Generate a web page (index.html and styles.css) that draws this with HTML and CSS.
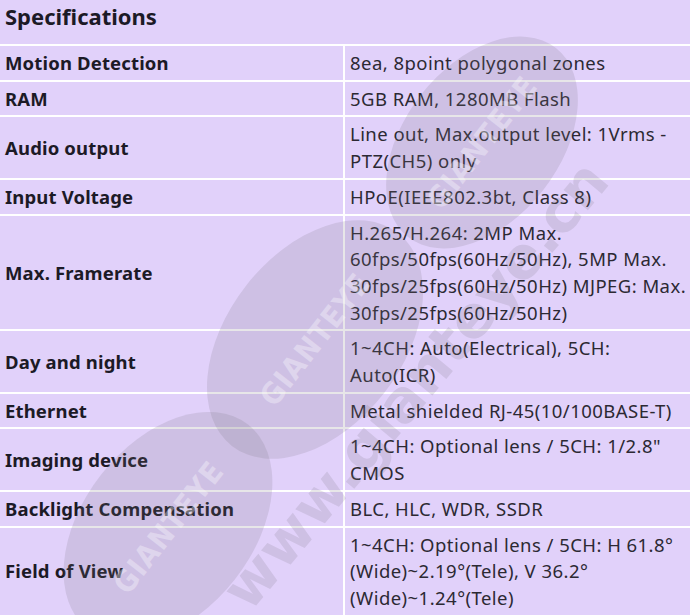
FILE: index.html
```html
<!DOCTYPE html>
<html lang="en">
<head>
<meta charset="utf-8">
<title>Specifications</title>
<link rel="stylesheet" href="styles.css">
</head>
<body>
<div class="page">
  <h2 class="title">Specifications</h2>
  <table class="spec">
    <tbody>
      <tr><th>Motion Detection</th><td>8ea, 8point polygonal zones</td></tr>
      <tr><th>RAM</th><td>5GB RAM, 1280MB Flash</td></tr>
      <tr><th>Audio output</th><td>Line out, Max.output level: 1Vrms -<br>PTZ(CH5) only</td></tr>
      <tr><th>Input Voltage</th><td>HPoE(IEEE802.3bt, Class 8)</td></tr>
      <tr><th>Max. Framerate</th><td>H.265/H.264: 2MP Max.<br>60fps/50fps(60Hz/50Hz), 5MP Max.<br>30fps/25fps(60Hz/50Hz) MJPEG: Max.<br>30fps/25fps(60Hz/50Hz)</td></tr>
      <tr><th>Day and night</th><td>1~4CH: Auto(Electrical), 5CH:<br>Auto(ICR)</td></tr>
      <tr><th>Ethernet</th><td>Metal shielded RJ-45(10/100BASE-T)</td></tr>
      <tr><th>Imaging device</th><td>1~4CH: Optional lens / 5CH: 1/2.8"<br>CMOS</td></tr>
      <tr><th>Backlight Compensation</th><td>BLC, HLC, WDR, SSDR</td></tr>
      <tr><th>Field of View</th><td>1~4CH: Optional lens / 5CH: H 61.8°<br>(Wide)~2.19°(Tele), V 36.2°<br>(Wide)~1.24°(Tele)</td></tr>
    </tbody>
  </table>
  <div class="watermark" aria-hidden="true">
    <div class="blob blob-a"><span>GIANTEYE</span></div>
    <div class="blob blob-b"><span>GIANTEYE</span></div>
    <div class="blob blob-c"><span>GIANTEYE</span></div>
    <div class="url">www.gianteye.cn</div>
  </div>
</div>
</body>
</html>
```

FILE: styles.css
```css
html, body {
  margin: 0;
  padding: 0;
  background: #e1d1fa;
}

body {
  font-family: "Noto Sans", "Open Sans", sans-serif;
  color: #262330;
  overflow: hidden;
}

.page {
  position: relative;
  width: 690px;
  height: 615px;
  overflow: hidden;
  background: #e1d1fa;
}

.title {
  margin: 0;
  padding: 1px 5px 0;
  height: 43px;
  font-size: 22px;
  line-height: 30px;
  font-weight: 700;
  color: #1c1a26;
}

.spec {
  width: 690px;
  border-collapse: collapse;
  table-layout: fixed;
}

.spec th,
.spec td {
  border-top: 2px solid #ffffff;
  padding: 4px 4px 3px 5px;
  font-size: 18.5px;
  line-height: 26.7px;
  vertical-align: middle;
  text-align: left;
  white-space: nowrap;
}

.spec th {
  width: 334px;
  font-weight: 700;
  color: #1c1a26;
  border-right: 2px solid #ffffff;
  letter-spacing: 0.15px;
}

.spec td {
  font-weight: 400;
  color: #2c2933;
  letter-spacing: 0.45px;
}

.watermark {
  position: absolute;
  inset: 0;
  pointer-events: none;
}

.blob {
  position: absolute;
  border-radius: 50%;
  background: rgba(120, 115, 130, 0.18);
  transform: rotate(-52deg);
  display: flex;
  align-items: center;
  justify-content: center;
}

.blob span {
  font-family: "DejaVu Sans Condensed", "Liberation Sans Narrow", sans-serif;
  font-weight: 700;
  font-size: 30px;
  color: rgba(255, 255, 255, 0.34);
  letter-spacing: 1px;
}

.blob-a {
  left: 362px;
  top: 65px;
  width: 240px;
  height: 155px;
}

.blob-b {
  left: 180px;
  top: 252px;
  width: 270px;
  height: 175px;
}

.blob-c {
  left: 38px;
  top: 442px;
  width: 260px;
  height: 170px;
}

.url {
  position: absolute;
  left: 125px;
  top: 355px;
  width: 580px;
  text-align: center;
  font-family: "DejaVu Sans", sans-serif;
  font-weight: 700;
  font-size: 58px;
  line-height: 60px;
  color: rgba(120, 115, 130, 0.18);
  transform: rotate(-50deg);
  white-space: nowrap;
}
```
